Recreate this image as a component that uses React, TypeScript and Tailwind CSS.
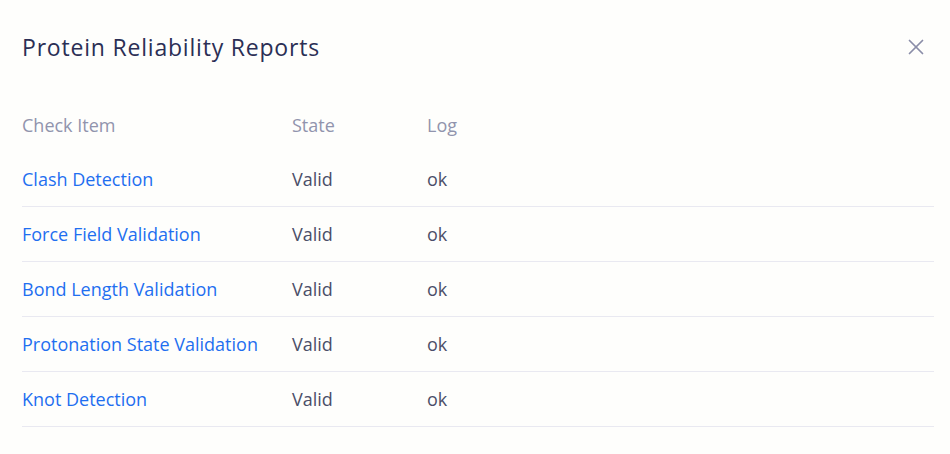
import { X } from 'lucide-react';

const rows = [
  { item: 'Clash Detection', state: 'Valid', log: 'ok' },
  { item: 'Force Field Validation', state: 'Valid', log: 'ok' },
  { item: 'Bond Length Validation', state: 'Valid', log: 'ok' },
  { item: 'Protonation State Validation', state: 'Valid', log: 'ok' },
  { item: 'Knot Detection', state: 'Valid', log: 'ok' },
];

export default function App() {
  return (
    <div
      className="h-[454px] w-[950px] bg-[#fefefc] pl-[22px] pr-4"
      style={{ fontFamily: '"Open Sans", "Noto Sans", sans-serif' }}
    >
      {/* Header */}
      <div className="flex h-[94px] items-center justify-between">
        <h2 className="text-[23px] font-medium tracking-[0.8px] text-[#2b2f55]">Protein Reliability Reports</h2>
        <button className="mr-[5px] text-[#8a8da8]">
          <X className="h-[26px] w-[26px]" strokeWidth={1.6} />
        </button>
      </div>

      {/* Table */}
      <table className="mt-[2px] w-[912px] border-collapse text-[18px]">
        <thead>
          <tr className="h-[55px] text-left">
            <th className="w-[270px] pt-[4px] font-normal text-[#9194ad]">Check Item</th>
            <th className="w-[135px] pt-[4px] font-normal text-[#9194ad]">State</th>
            <th className="pt-[4px] font-normal text-[#9194ad]">Log</th>
          </tr>
        </thead>
        <tbody>
          {rows.map((r) => (
            <tr key={r.item} className="h-[55px] border-b border-[#e9e9f1]">
              <td className="pt-[2px] text-[#1f6ff0]">{r.item}</td>
              <td className="pt-[2px] text-[#4b4e68]">{r.state}</td>
              <td className="pt-[2px] text-[#4b4e68]">{r.log}</td>
            </tr>
          ))}
        </tbody>
      </table>
    </div>
  );
}
